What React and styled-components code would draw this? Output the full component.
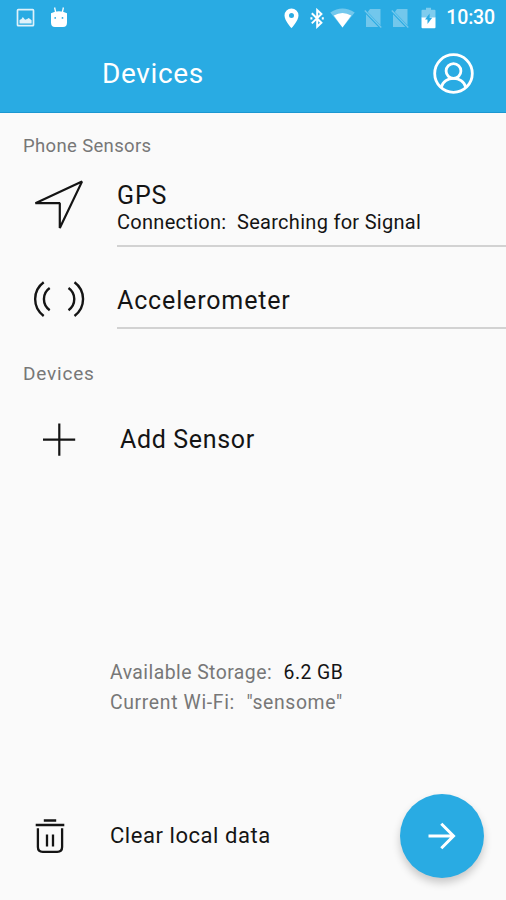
import styled, { createGlobalStyle } from 'styled-components';

const GlobalStyle = createGlobalStyle`
  * {
    box-sizing: border-box;
  }
  body {
    margin: 0;
    background: #fafafa;
  }
`;

const Screen = styled.div`
  display: flex;
  flex-direction: column;
  width: 506px;
  height: 900px;
  overflow: hidden;
  background: #fafafa;
  color: #141414;
  font-family: Roboto, "Liberation Sans", sans-serif;
`;

const Header = styled.header`
  flex: none;
  height: 113px;
  background: #29abe3;
  border-bottom: 1px solid #1b97d1;
  color: #fff;
`;

const StatusBar = styled.div`
  display: flex;
  align-items: center;
  height: 36px;
  padding: 0 11px 0 16px;
`;

const StatusGroup = styled.div`
  display: flex;
  align-items: center;
  gap: ${props => props.$gap}px;
  margin-left: ${props => (props.$end ? "auto" : "0")};
`;

const Clock = styled.span`
  margin-left: 1px;
  font-size: 19.5px;
  font-weight: 500;
  line-height: 36px;
  letter-spacing: -0.15px;
`;

const TitleBar = styled.div`
  display: flex;
  align-items: center;
  justify-content: space-between;
  height: 75px;
  padding: 0 32px 0 102px;
`;

const Text = styled.span`
  display: block;
  font-size: ${props => props.$size}px;
  line-height: ${props => props.$line || props.$size * 1.2}px;
  letter-spacing: ${props => props.$spacing || 0}px;
  color: ${props => props.$color || "inherit"};
  white-space: pre;
`;

const SectionLabel = styled.h2`
  flex: none;
  height: ${props => props.$height}px;
  margin: 0;
  padding-left: 23px;
  font-size: ${props => props.$size}px;
  font-weight: 400;
  line-height: ${props => props.$height}px;
  letter-spacing: ${props => props.$spacing}px;
  color: #777;
`;

const Row = styled.div`
  display: flex;
  flex: none;
  height: ${props => props.$height}px;
`;

const IconCell = styled.div`
  display: flex;
  flex: none;
  justify-content: center;
  width: ${props => props.$width || 117}px;
  margin-right: ${props => props.$right || 0}px;
  padding-top: ${props => props.$top || 0}px;
`;

const RowBody = styled.div`
  flex: 1;
  padding-top: ${props => props.$top || 0}px;
  border-bottom: ${props => (props.$line ? "2px solid #d2d2d2" : "none")};
`;

const Info = styled.div`
  flex: none;
  margin-top: 199px;
  padding-left: 110px;
`;

const InfoLine = styled.div`
  display: flex;
  gap: ${props => props.$gap}px;
`;

const Footer = styled.footer`
  display: flex;
  align-items: center;
  height: 84px;
  margin-top: 77px;
  padding-right: 22px;
`;

const NextButton = styled.button`
  display: flex;
  align-items: center;
  justify-content: center;
  width: 84px;
  height: 84px;
  margin-left: auto;
  padding: 0;
  border: 0;
  border-radius: 50%;
  background: #29abe3;
  box-shadow: 0 5px 9px rgba(0, 0, 0, 0.2);
`;

const Svg = styled.svg`
  display: block;
  flex: none;
  margin-left: ${props => props.$left || 0}px;
  fill: none;
  stroke: currentColor;
  stroke-width: ${props => props.$stroke || 2};
`;

const Solid = styled(Svg)`
  fill: currentColor;
  stroke: none;
`;

const PictureIcon = () => (
  <Svg width="19" height="20" viewBox="0 0 19 20" $stroke={1.7} opacity="0.85">
    <rect x="1.5" y="1.7" width="16" height="16" rx="0.8" />
    <path d="M3.5 15.5v-3.5l2-1 1.3-2 2.3 2.8 2-.8 1.6-1 1.7 1.2 1.2 1v3.3z" fill="currentColor" stroke="none" />
  </Svg>
);

const RobotIcon = () => (
  <Solid width="18" height="22" viewBox="0 0 18 22">
    <path d="M4.6 .5l1 4.7M13.4 .5l-1 4.7" stroke="currentColor" strokeWidth="1.3" />
    <path fillRule="evenodd" d="M1 6.2Q9 2.4 17 6.2V15.5q0 4.5-4 4.5H5q-4 0-4-4.5zM4.3 10.9a.9 .9 0 1 0 1.8 0a.9 .9 0 1 0-1.8 0M11.6 10.9a.9 .9 0 1 0 1.8 0a.9 .9 0 1 0-1.8 0" />
  </Solid>
);

const PinIcon = () => (
  <Solid width="15" height="21" viewBox="0 0 15 21">
    <path fillRule="evenodd" d="M7.5.5A7 7 0 0 0 .5 7.5c0 5.2 7 12.7 7 12.7s7-7.5 7-12.7a7 7 0 0 0-7-7zM5 7.5a2.5 2.5 0 1 0 5 0a2.5 2.5 0 1 0-5 0" />
  </Solid>
);

const BluetoothIcon = () => (
  <Svg width="15" height="21" viewBox="0 0 15 21" $stroke={2} $left={2}>
    <path d="M1.8 5.2l9.6 9.5-4.2 4V2.1L11.4 6 1.8 15.4" />
    <path d="M1.4 9.2v2.3M12.8 9.2v2.3" />
  </Svg>
);

const WifiIcon = () => (
  <Solid width="25" height="20" viewBox="0 0 25 20" $left={-4}>
    <path d="M.3 4.5Q12.5-3.5 24.7 4.5L12.5 19.5z" opacity="0.35" />
    <path d="M3.8 7.6Q12.5 2.2 21.2 7.6L12.5 19.5z" />
  </Solid>
);

const NoSimIcon = () => (
  <Solid width="18" height="21" viewBox="0 0 18 21" opacity="0.34">
    <path d="M6 1h10.5v16.2L3.8 4zM2 6.2L14.3 19H2z" />
    <path d="M.8 2.5L17.3 19.5" stroke="currentColor" strokeWidth="1.3" />
  </Solid>
);

const BatteryIcon = () => (
  <Solid width="15" height="22" viewBox="0 0 15 22" $left={3}>
    <path d="M5 .7h5v2h3.5q1 0 1 1V11H.5V3.7q0-1 1-1H5z" opacity="0.4" />
    <path d="M.5 10.5h14v9.7q0 1-1 1h-12q-1 0-1-1z" />
    <path d="M8.6 6.5v4.2h2.6L6.5 17v-4.4H4z" fill="#29abe3" />
  </Solid>
);

const ProfileIcon = () => (
  <Svg width="41" height="41" viewBox="0 0 41 41" $stroke={2.8}>
    <circle cx="20.5" cy="20.5" r="18.8" />
    <circle cx="20.5" cy="18" r="7.4" />
    <path d="M8.3 34.2C11 22.4 30 22.4 32.7 34.2" />
  </Svg>
);

const LocationIcon = () => (
  <Svg width="54" height="54" viewBox="0 0 54 54" $stroke={2.2}>
    <path d="M50 2.6L3.4 24.2L27.8 24.2L27.8 49z" strokeLinejoin="bevel" />
  </Svg>
);

const WavesIcon = () => (
  <Svg width="54" height="40" viewBox="0 0 54 40" $stroke={2.4}>
    <path d="M11.7 3.2C.3 11.6.3 28.5 11.7 37M17.7 9C10 14.3 10 25.9 17.7 31.2" />
    <path d="M42.5 3.2C53.9 11.6 53.9 28.5 42.5 37M36.5 9C44.2 14.3 44.2 25.9 36.5 31.2" />
  </Svg>
);

const PlusIcon = () => (
  <Svg width="34" height="34" viewBox="0 0 34 34" $stroke={2.2}>
    <path d="M17.3 .5v32.2M1 16.6h32.2" />
  </Svg>
);

const TrashIcon = () => (
  <Svg width="32" height="36" viewBox="0 0 32 36" $stroke={2.3}>
    <path d="M9.8 2.5h12.4M1.7 7h28.6" />
    <path d="M3.9 10.3v18.8q0 4.8 4.8 4.8h14.6q4.8 0 4.8-4.8V10.3M13 16.5v12M19 16.5v12" />
  </Svg>
);

const ArrowIcon = () => (
  <Svg width="30" height="30" viewBox="0 0 30 30" $stroke={3} color="#fff">
    <path d="M1.5 15h25M14.3 2.8L26.5 15L14.3 27.2" />
  </Svg>
);

const App = () => {
  return (
    <Screen>
      <GlobalStyle />
      <Header>
        <StatusBar>
          <StatusGroup $gap={15}>
            <PictureIcon />
            <RobotIcon />
          </StatusGroup>
          <StatusGroup $gap={9} $end>
            <PinIcon />
            <BluetoothIcon />
            <WifiIcon />
            <NoSimIcon />
            <NoSimIcon />
            <BatteryIcon />
            <Clock>10:30</Clock>
          </StatusGroup>
        </StatusBar>
        <TitleBar>
          <Text $size={28} $spacing={0.65}>Devices</Text>
          <ProfileIcon />
        </TitleBar>
      </Header>

      <SectionLabel $height={66} $size={18.5} $spacing={0.35}>Phone Sensors</SectionLabel>
      <Row $height={68}>
        <IconCell><LocationIcon /></IconCell>
        <RowBody $line $top={1}>
          <Text $size={25} $line={32} $spacing={0.9}>GPS</Text>
          <Text $size={20} $line={21} $spacing={0.29}>Connection:  Searching for Signal</Text>
        </RowBody>
      </Row>
      <Row $height={82}>
        <IconCell $top={32}><WavesIcon /></IconCell>
        <RowBody $line $top={39}>
          <Text $size={25} $line={30} $spacing={0.85}>Accelerometer</Text>
        </RowBody>
      </Row>

      <SectionLabel $height={90} $size={19} $spacing={0.8}>Devices</SectionLabel>
      <Row $height={40}>
        <IconCell $top={4} $right={3}><PlusIcon /></IconCell>
        <RowBody $top={6}>
          <Text $size={25} $line={30} $spacing={0.65}>Add Sensor</Text>
        </RowBody>
      </Row>

      <Info>
        <InfoLine $gap={11.5}>
          <Text $size={19.4} $line={29.5} $spacing={0.45} $color="#777">Available Storage:</Text>
          <Text $size={19.4} $line={29.5} $spacing={0.45}>6.2 GB</Text>
        </InfoLine>
        <InfoLine $gap={11.5}>
          <Text $size={19.4} $line={29.5} $spacing={0.65} $color="#777">Current Wi-Fi:</Text>
          <Text $size={19.4} $line={29.5} $spacing={0.6} $color="#777">"sensome"</Text>
        </InfoLine>
      </Info>

      <Footer>
        <IconCell $width={99} $right={11}><TrashIcon /></IconCell>
        <Text $size={22} $spacing={0.55}>Clear local data</Text>
        <NextButton aria-label="Next"><ArrowIcon /></NextButton>
      </Footer>
    </Screen>
  );
}

export default App;
